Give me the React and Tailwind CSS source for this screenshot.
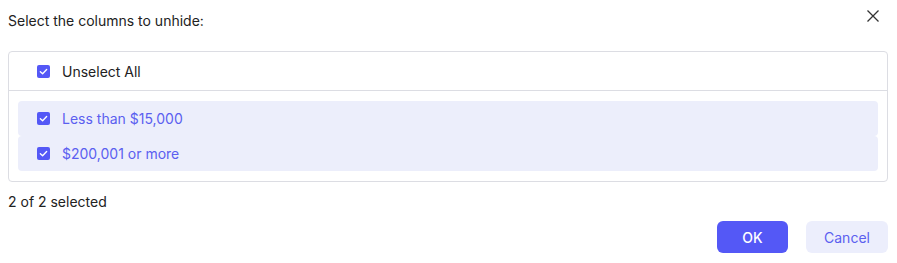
import { useState } from "react";

const Check = ({ checked }) => (
  <span
    className={`flex h-[13px] w-[13px] shrink-0 items-center justify-center rounded-[2px] ${
      checked ? "bg-[#5458f6]" : "border border-gray-400 bg-white"
    }`}
  >
    {checked && (
      <svg width="9" height="9" viewBox="0 0 10 10" fill="none">
        <path d="M1.5 5.2 L4 7.5 L8.5 2.8" stroke="white" strokeWidth="1.5" strokeLinecap="round" strokeLinejoin="round" />
      </svg>
    )}
  </span>
);

const COLUMNS = [
  { id: 1, label: "Less than $15,000" },
  { id: 2, label: "$200,001 or more" },
];

export default function App() {
  const [selected, setSelected] = useState([1, 2]);
  const all = selected.length === COLUMNS.length;

  const toggle = (id) =>
    setSelected((s) => (s.includes(id) ? s.filter((x) => x !== id) : [...s, id]));

  return (
    <div className="h-[263px] w-[897px] bg-white pl-2 pr-[9px] font-['Inter',sans-serif] text-[14px] text-[#222]">
      <div className="flex items-center justify-between pt-[11px]">
        <p className="leading-[20px]">Select the columns to unhide:</p>
        <button type="button" className="mr-[9px] mt-[-10px] text-[#333]">
          <svg width="12" height="12" viewBox="0 0 12 12" fill="none">
            <path d="M0.5 0.5 L11.5 11.5 M11.5 0.5 L0.5 11.5" stroke="currentColor" strokeWidth="1.3" />
          </svg>
        </button>
      </div>

      <div className="mt-[20px] rounded-[4px] border border-[#dcdde3]">
        <button
          type="button"
          onClick={() => setSelected(all ? [] : COLUMNS.map((c) => c.id))}
          className="flex h-[39px] w-full items-center gap-[12px] border-b border-[#dcdde3] pl-[28px] text-left"
        >
          <Check checked={all} />
          <span>{all ? "Unselect All" : "Select All"}</span>
        </button>
        <div className="px-[9px] py-[10px]">
          {COLUMNS.map((c) => {
            const on = selected.includes(c.id);
            return (
              <button
                type="button"
                key={c.id}
                onClick={() => toggle(c.id)}
                className={`flex h-[35px] w-full items-center gap-[12px] rounded-[4px] pl-[19px] text-left ${
                  on ? "bg-[#eceefb] text-[#5b5ff0]" : ""
                }`}
              >
                <Check checked={on} />
                <span>{c.label}</span>
              </button>
            );
          })}
        </div>
      </div>

      <p className="mt-[10px] leading-[20px]">
        {selected.length} of {COLUMNS.length} selected
      </p>

      <div className="mt-[9px] flex justify-end gap-[18px]">
        <button type="button" className="h-[32px] w-[71px] rounded-[6px] bg-[#5458f6] font-medium text-white">
          OK
        </button>
        <button type="button" className="h-[32px] w-[82px] rounded-[6px] bg-[#eceefc] text-[#5b5ff0]">
          Cancel
        </button>
      </div>
    </div>
  );
}
